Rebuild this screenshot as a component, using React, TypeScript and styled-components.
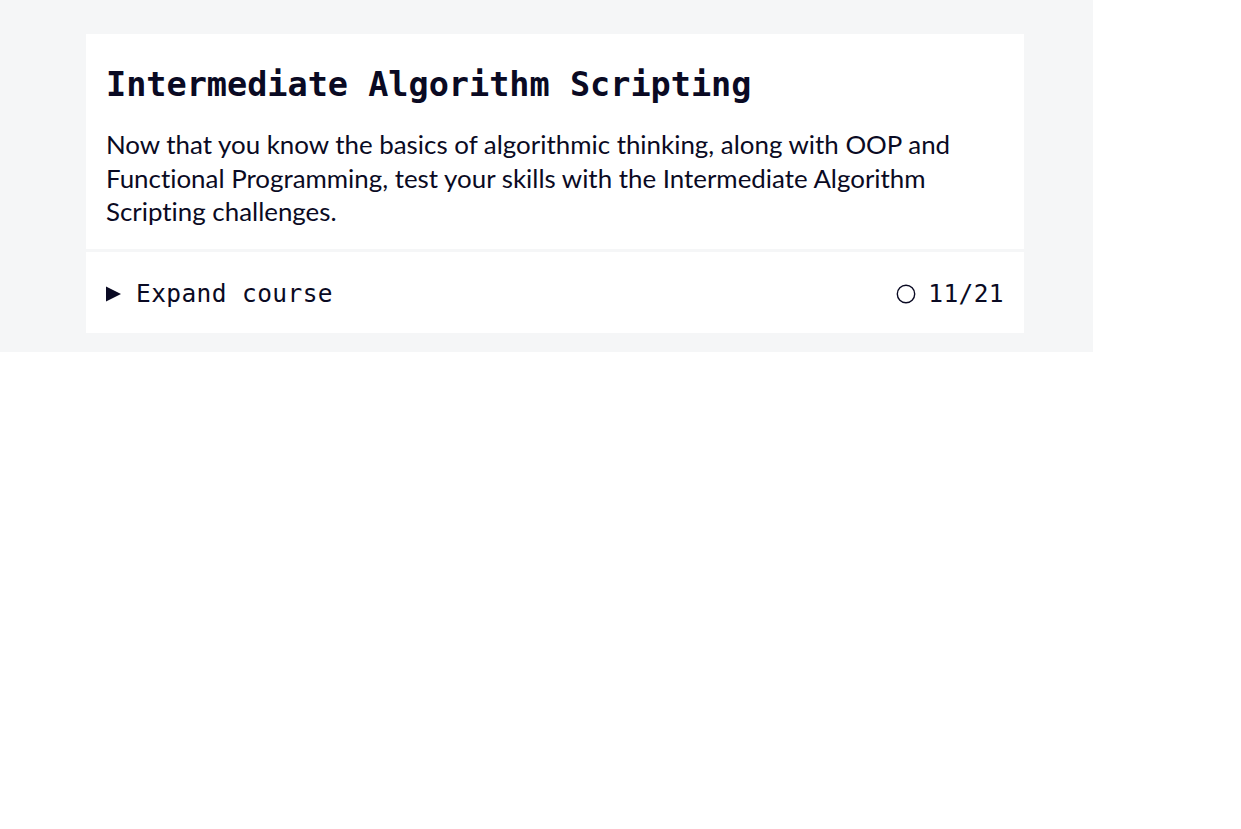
import React from "react";
import styled, { createGlobalStyle } from "styled-components";

const GlobalStyle = createGlobalStyle`
  html, body { margin: 0; padding: 0; background: #ffffff; }
  body { font-family: Lato, "Noto Sans", sans-serif; color: #0a0a23; }
`;

const Page = styled.div`
  width: 1093px;
  box-sizing: border-box;
  background: #f5f6f7;
  padding: 34px 69px 19px 86px;
`;

const Card = styled.section`
  background: #ffffff;
  display: flex;
  flex-direction: column;
`;

const Header = styled.div`
  padding: 26px 20px 20px 20px;
  border-bottom: 3px solid #f5f6f7;
`;

const Title = styled.h2`
  margin: 0 0 18px 0;
  font-family: "DejaVu Sans Mono", "Liberation Mono", monospace;
  font-weight: 700;
  font-size: 33.5px;
  line-height: 1.5;
  color: #0a0a23;
`;

const Description = styled.p`
  margin: 0;
  font-family: Lato, "Noto Sans", sans-serif;
  font-size: 25.9px;
  line-height: 33.5px;
  font-variant-ligatures: none;
  color: #0a0a23;
`;

const Footer = styled.div`
  height: 81px;
  box-sizing: border-box;
  padding: 3px 20px 0 20px;
  display: flex;
  align-items: center;
  justify-content: space-between;
  font-family: "DejaVu Sans Mono", "Liberation Mono", monospace;
  font-size: 24.5px;
  color: #0a0a23;
`;

const Toggle = styled.button`
  display: flex;
  align-items: center;
  gap: 14px;
  border: 0;
  background: none;
  padding: 0;
  font: inherit;
  color: inherit;
  letter-spacing: 0.4px;
  cursor: pointer;
`;

const Progress = styled.div`
  display: flex;
  align-items: center;
  gap: 12px;
  letter-spacing: 0.4px;
`;

const Arrow = () => (
  <svg width="16" height="16" viewBox="0 0 16 16" aria-hidden="true">
    <polygon points="0,0.5 15,8 0,15.5" fill="#0a0a23" />
  </svg>
);

const Circle = () => (
  <svg width="20" height="20" viewBox="0 0 20 20" aria-hidden="true">
    <circle cx="10" cy="10" r="8.7" fill="none" stroke="#0a0a23" strokeWidth="1.4" />
  </svg>
);

export default function App() {
  return (
    <>
      <GlobalStyle />
      <Page>
        <Card>
          <Header>
            <Title>Intermediate Algorithm Scripting</Title>
            <Description>
              Now that you know the basics of algorithmic thinking, along with OOP and
              Functional Programming, test your skills with the Intermediate Algorithm
              Scripting challenges.
            </Description>
          </Header>
          <Footer>
            <Toggle>
              <Arrow />
              <span>Expand course</span>
            </Toggle>
            <Progress>
              <Circle />
              <span>11/21</span>
            </Progress>
          </Footer>
        </Card>
      </Page>
    </>
  );
}
